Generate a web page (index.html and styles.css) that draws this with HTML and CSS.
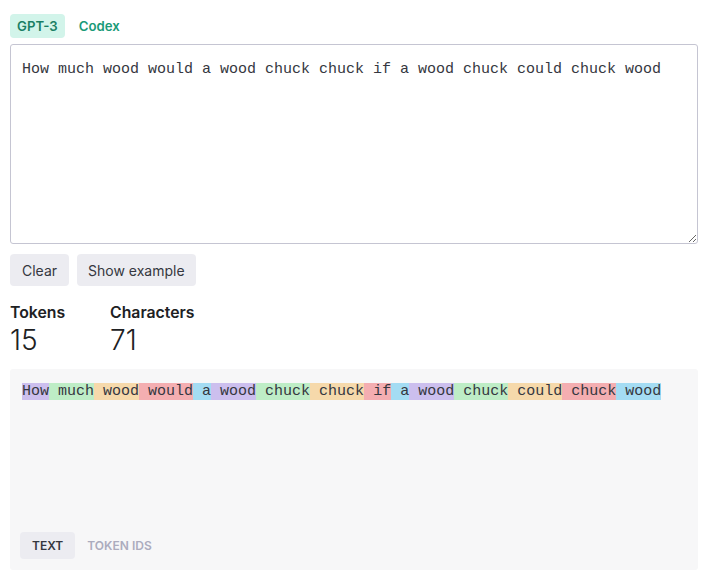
FILE: index.html
```html
<!DOCTYPE html>
<html>
<head>
<meta charset="utf-8">
<link rel="stylesheet" href="styles.css">
</head>
<body>
<div class="page">
  <div class="models">
    <span class="model active">GPT-3</span>
    <span class="model">Codex</span>
  </div>
  <textarea class="input" spellcheck="false">How much wood would a wood chuck chuck if a wood chuck could chuck wood</textarea>
  <div class="actions">
    <button class="btn">Clear</button>
    <button class="btn">Show example</button>
  </div>
  <div class="stats">
    <div class="stat stat-tokens">
      <div class="stat-label">Tokens</div>
      <div class="stat-value">15</div>
    </div>
    <div class="stat">
      <div class="stat-label">Characters</div>
      <div class="stat-value">71</div>
    </div>
  </div>
  <div class="output">
    <div class="tokens"><span class="t t1">How</span><span class="t t2"> much</span><span class="t t3"> wood</span><span class="t t4"> would</span><span class="t t5"> a</span><span class="t t1"> wood</span><span class="t t2"> chuck</span><span class="t t3"> chuck</span><span class="t t4"> if</span><span class="t t5"> a</span><span class="t t1"> wood</span><span class="t t2"> chuck</span><span class="t t3"> could</span><span class="t t4"> chuck</span><span class="t t5"> wood</span></div>
    <div class="view-tabs">
      <span class="view-tab active">TEXT</span>
      <span class="view-tab">TOKEN IDS</span>
    </div>
  </div>
</div>
</body>
</html>
```

FILE: styles.css
```css
html, body {
  margin: 0;
  padding: 0;
  background: #ffffff;
}
body {
  font-family: Inter, "Noto Sans", sans-serif;
  color: #202123;
}
.page {
  padding: 14px 14px 0 10px;
  display: flex;
  flex-direction: column;
}
.models {
  display: flex;
  align-items: center;
  gap: 7px;
  height: 24px;
}
.model {
  font-size: 13.2px;
  font-weight: 600;
  color: #1a9a78;
  padding: 0 7px;
  line-height: 24px;
  border-radius: 4px;
}
.model.active {
  background: #d2f4ea;
  color: #1a7f64;
}
.input {
  margin-top: 6px;
  box-sizing: border-box;
  width: 688px;
  height: 200px;
  border: 1px solid #c5c5d2;
  border-radius: 3px;
  padding: 16px 11px 12px;
  font-family: "Liberation Mono", "DejaVu Sans Mono", monospace;
  font-size: 15px;
  line-height: 18px;
  color: #353740;
  resize: vertical;
  outline: none;
}
.actions {
  display: flex;
  gap: 8px;
  margin-top: 10px;
}
.btn {
  font-family: Inter, "Noto Sans", sans-serif;
  font-size: 14px;
  color: #353740;
  background: #ececf1;
  border: none;
  border-radius: 4px;
  height: 32px;
  padding: 0 12px;
}
.btn + .btn {
  padding: 0 11px;
}
.stats {
  display: flex;
  margin-top: 17px;
}
.stat-tokens {
  width: 100px;
}
.stat-label {
  font-size: 15.8px;
  font-weight: 600;
  line-height: 20px;
  color: #202123;
}
.stat-value {
  font-size: 28px;
  font-weight: 300;
  line-height: 34px;
  color: #202123;
}
.output {
  margin-top: 12px;
  box-sizing: border-box;
  width: 688px;
  height: 201px;
  background: #f7f7f8;
  border-radius: 3px;
  padding: 14px 12px 11px 12px;
  display: flex;
  flex-direction: column;
}
.tokens {
  font-family: "Liberation Mono", "DejaVu Sans Mono", monospace;
  font-size: 15px;
  line-height: 18px;
  color: #353740;
  white-space: pre-wrap;
}
.t1 { background: rgba(107, 64, 216, 0.3); }
.t2 { background: rgba(104, 222, 122, 0.4); }
.t3 { background: rgba(244, 172, 54, 0.4); }
.t4 { background: rgba(239, 65, 70, 0.4); }
.t5 { background: rgba(39, 181, 234, 0.4); }
.view-tabs {
  margin-top: auto;
  margin-left: -2px;
  display: flex;
  gap: 0;
}
.view-tab {
  font-size: 12px;
  font-weight: 600;
  line-height: 27px;
  padding: 0 12px;
  color: #acacbe;
  border-radius: 4px;
}
.view-tab.active {
  background: #ececf1;
  color: #353740;
}
```
